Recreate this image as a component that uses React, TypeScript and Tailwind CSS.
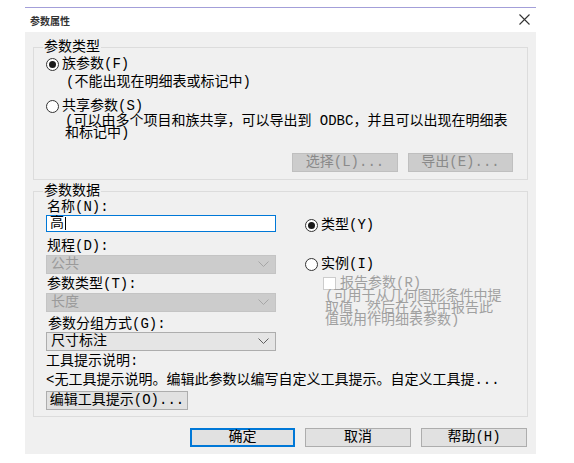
import clsx from "clsx";

function Radio({ checked }: { checked?: boolean }) {
  return (
    <span className="flex h-[13px] w-[13px] shrink-0 items-center justify-center rounded-full border border-[#333333] bg-white">
      {checked && <span className="h-[7px] w-[7px] rounded-full bg-[#1a1a1a]" />}
    </span>
  );
}

function Chevron({ disabled }: { disabled?: boolean }) {
  return (
    <svg width="11" height="7" viewBox="0 0 11 7" fill="none">
      <polyline
        points="0.5,0.5 5.5,5.5 10.5,0.5"
        stroke={disabled ? "#a6a6a6" : "#606060"}
        strokeWidth="1"
      />
    </svg>
  );
}

function Select({ value, disabled }: { value: string; disabled?: boolean }) {
  return (
    <div
      className={clsx(
        "flex h-[19px] w-[230px] items-center justify-between border pl-[4px] pr-[6px] leading-[17px]",
        disabled
          ? "border-[#c4c4c4] bg-[#cccccc] text-[#9a9a9a]"
          : "border-[#adadad] bg-[#e5e5e5] text-black"
      )}
    >
      <span>{value}</span>
      <Chevron disabled={disabled} />
    </div>
  );
}

function Button({
  label,
  width,
  disabled,
  primary,
}: {
  label: string;
  width: string;
  disabled?: boolean;
  primary?: boolean;
}) {
  return (
    <div
      className={clsx(
        "flex h-[19px] items-center justify-center border leading-[17px]",
        width,
        disabled
          ? "border-[#bfbfbf] bg-[#cccccc] text-[#8a8a8a]"
          : "bg-[#e1e1e1] text-black",
        !disabled && !primary && "border-[#adadad]",
        primary && "border-[#0078d7] shadow-[inset_0_0_0_1px_#0078d7]"
      )}
    >
      {label}
    </div>
  );
}

export default function App() {
  return (
    <div className="h-[463px] w-[574px] bg-white pl-[25px] pt-[7px] font-['Liberation_Mono','Noto_Sans_CJK_SC',monospace] text-[14px] text-black">
      <div className="w-[511px] border-t border-[#a39fd9]">
        <div className="flex h-[24px] items-center justify-between pl-[5px] pr-[6px]">
          <span className="mt-[2px] font-['Noto_Sans_CJK_SC',sans-serif] text-[10px] font-bold leading-[12px] text-[#333]">
            参数属性
          </span>
          <svg width="11" height="11" viewBox="0 0 11 11" className="-mt-[2px]">
            <path d="M0.5 0.5 L10.5 10.5 M10.5 0.5 L0.5 10.5" stroke="#333" strokeWidth="1.1" />
          </svg>
        </div>

        <div className="h-[422px] bg-[#f0f0f0] px-[8px] pt-[7px]">
          {/* 参数类型 */}
          <fieldset className="min-w-0 border border-[#dcdcdc] pb-[7px]">
            <legend className="ml-[9px] px-[1px] leading-[16px]">参数类型</legend>
            <div className="pl-[12px] pr-[14px]">
              <div className="flex h-[18px] items-center gap-[3px] leading-[18px]">
                <Radio checked />
                <span>族参数(F)</span>
              </div>
              <div className="h-[18px] pl-[20px] leading-[18px]">(不能出现在明细表或标记中)</div>
              <div className="mt-[6px] flex h-[18px] items-center gap-[3px] leading-[18px]">
                <Radio />
                <span>共享参数(S)</span>
              </div>
              <div className="pl-[19px] leading-[12px]">
                <div className="whitespace-nowrap">(可以由多个项目和族共享，可以导出到 ODBC，并且可以出现在明细表</div>
                <div>和标记中)</div>
              </div>
              <div className="mt-[14px] flex justify-end gap-[10px]">
                <Button label="选择(L)..." width="w-[106px]" disabled />
                <Button label="导出(E)..." width="w-[105px]" disabled />
              </div>
            </div>
          </fieldset>

          {/* 参数数据 */}
          <fieldset className="mt-[3px] min-w-0 border border-[#dcdcdc] pb-[6px]">
            <legend className="ml-[9px] px-[1px] leading-[16px]">参数数据</legend>
            <div className="flex pl-[12px]">
              <div className="w-[230px]">
                <div className="h-[16px] pl-[1px] leading-[16px]">名称(N):</div>
                <div className="flex h-[17px] w-[230px] items-center border border-[#0078d7] bg-white pl-[3px] leading-[15px]">
                  <span>高</span>
                  <span className="ml-px h-[13px] w-px bg-black" />
                </div>
                <div className="mt-[6px] h-[16px] pl-[1px] leading-[16px]">规程(D):</div>
                <div className="mt-[1px]">
                  <Select value="公共" disabled />
                </div>
                <div className="mt-[2px] h-[16px] pl-[1px] leading-[16px]">参数类型(T):</div>
                <div className="mt-[1px]">
                  <Select value="长度" disabled />
                </div>
                <div className="mt-[4px] h-[16px] pl-[2px] leading-[16px]">参数分组方式(G):</div>
                <Select value="尺寸标注" />
                <div className="mt-[2px] h-[16px] leading-[16px]">工具提示说明:</div>
                <div className="mt-[3px] h-[16px] whitespace-nowrap leading-[16px]">
                  &lt;无工具提示说明。编辑此参数以编写自定义工具提示。自定义工具提...
                </div>
                <div className="mt-[3px]">
                  <Button label="编辑工具提示(O)..." width="w-[142px]" />
                </div>
              </div>

              <div className="ml-[29px]">
                <div className="mt-[17px] flex h-[18px] items-center gap-[3px] leading-[18px]">
                  <Radio checked />
                  <span>类型(Y)</span>
                </div>
                <div className="mt-[21px] flex h-[18px] items-center gap-[3px] leading-[18px]">
                  <Radio />
                  <span>实例(I)</span>
                </div>
                <div className="mt-[3px] flex h-[14px] items-center gap-[4px] pl-[18px] leading-[14px] text-[#a0a0a0]">
                  <span className="h-[13px] w-[13px] border border-[#cccccc] bg-white" />
                  <span>报告参数(R)</span>
                </div>
                <div className="pl-[20px] leading-[12px] text-[#a0a0a0]">
                  <div>(可用于从几何图形条件中提</div>
                  <div>取值，然后在公式中报告此</div>
                  <div>值或用作明细表参数)</div>
                </div>
              </div>
            </div>
          </fieldset>

          <div className="mt-[11px] flex justify-end gap-[10px] pr-[1px]">
            <Button label="确定" width="w-[105px]" primary />
            <Button label="取消" width="w-[106px]" />
            <Button label="帮助(H)" width="w-[106px]" />
          </div>
        </div>
      </div>
    </div>
  );
}
